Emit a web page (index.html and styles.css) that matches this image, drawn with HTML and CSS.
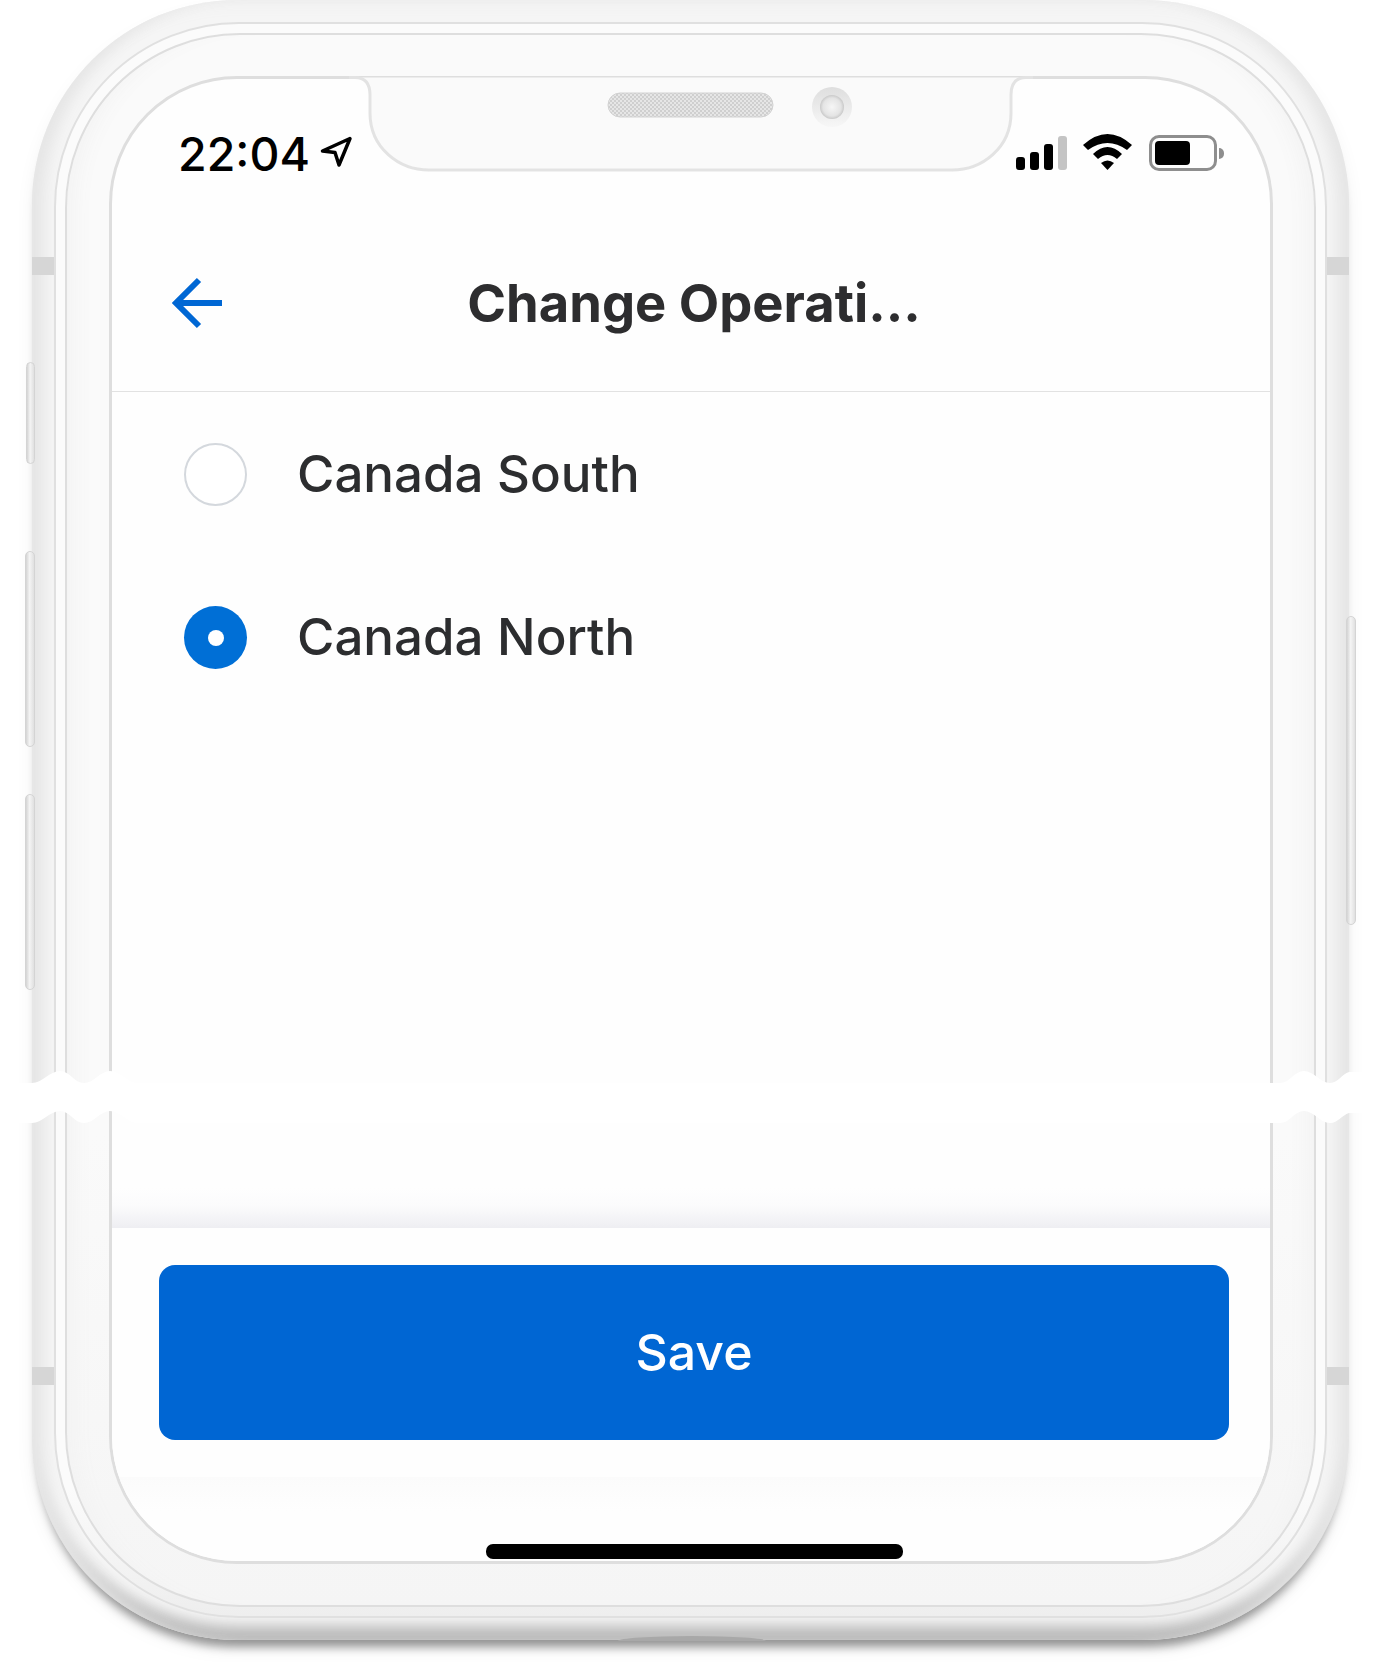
FILE: index.html
```html
<!DOCTYPE html>
<html lang="en">
<head>
<meta charset="utf-8">
<title>Change Operating Region</title>
<link rel="stylesheet" href="styles.css">
</head>
<body>
<div class="phone">
  <span class="side-btn btn-mute"></span>
  <span class="side-btn btn-up"></span>
  <span class="side-btn btn-down"></span>
  <span class="side-btn btn-power"></span>
  <span class="antenna ant-tl"></span>
  <span class="antenna ant-tr"></span>
  <span class="antenna ant-bl"></span>
  <span class="antenna ant-br"></span>
  <span class="foot-bump"></span>
  <div class="rim">
    <div class="bezel">
      <svg class="notch" width="684" height="97" viewBox="0 0 684 97">
        <defs>
          <pattern id="mesh" width="4" height="4" patternUnits="userSpaceOnUse">
            <rect width="4" height="4" fill="#e6e6e6"/>
            <path d="M0 0L4 4M4 0L0 4" stroke="#cfcfcf" stroke-width="1"/>
          </pattern>
          <radialGradient id="lens" cx="50%" cy="50%" r="50%">
            <stop offset="0" stop-color="#f6f6f6"/>
            <stop offset="0.75" stop-color="#e4e4e4"/>
            <stop offset="1" stop-color="#c9c9c9"/>
          </radialGradient>
          <linearGradient id="ring" x1="0" y1="0" x2="0" y2="1">
            <stop offset="0" stop-color="#dedede"/>
            <stop offset="1" stop-color="#f7f7f7"/>
          </linearGradient>
        </defs>
        <path d="M0 2.5H6Q21 2.5 21 20V38C21 73 50 95 80 95H603C633 95 662 73 662 38V20Q662 2.5 677 2.5H684" fill="#fafafa" stroke="#e3e3e3" stroke-width="3"/>
        <rect x="259" y="18" width="165" height="24" rx="12" fill="url(#mesh)" stroke="#d2d2d2" stroke-width="1"/>
        <circle cx="483" cy="32" r="20" fill="url(#ring)"/>
        <circle cx="483" cy="32" r="12" fill="url(#lens)"/>
      </svg>
      <div class="screen">
        <div class="status">
          <div class="clock">
            <span class="time">22:04</span>
            <svg class="loc" width="33" height="32" viewBox="0 0 33 32">
              <path d="M30 2.5L2.5 15L15 16.5L19 29Z" fill="none" stroke="#000" stroke-width="3.5" stroke-linejoin="round"/>
            </svg>
          </div>
          <div class="indicators">
            <div class="signal">
              <span class="bar bar-1"></span>
              <span class="bar bar-2"></span>
              <span class="bar bar-3"></span>
              <span class="bar bar-4"></span>
            </div>
            <svg class="wifi" width="49" height="36" viewBox="0 0 49 36">
              <path d="M0 11Q24.5 -11 49 11L44 16Q24.5 2 5 16Z"/>
              <path d="M10 20Q24.5 6 39 20L34 25Q24.5 17 15 25Z"/>
              <path d="M18 29Q24.5 24 31 29L24.5 36Z"/>
            </svg>
            <div class="battery">
              <div class="battery-case"><span class="battery-level"></span></div>
              <span class="battery-nub"></span>
            </div>
          </div>
        </div>
        <header class="nav">
          <svg class="back" width="52" height="54" viewBox="0 0 52 54">
            <path d="M52 26H6M29 3L6 26L29 49" fill="none" stroke="#0067d4" stroke-width="6"/>
          </svg>
          <h1 class="title">Change Operati...</h1>
          <span class="nav-spacer"></span>
        </header>
        <main class="options">
          <div class="option">
            <span class="radio"></span>
            <span class="option-label">Canada South</span>
          </div>
          <div class="option">
            <span class="radio radio-on"></span>
            <span class="option-label">Canada North</span>
          </div>
        </main>
        <div class="actions">
          <button class="save" type="button">Save</button>
        </div>
        <div class="home"><span class="home-bar"></span></div>
      </div>
    </div>
  </div>
  <svg class="tear" width="1388" height="64" viewBox="0 0 1388 64">
    <path d="M0 14C10 14 22 14 32 14C42 14 50 2 60 2C70 2 74 14 84 14C94 14 100 2 110 2C120 2 128 14 138 14H1250C1260 14 1268 14 1280 14C1290 14 1294 2 1304 2C1314 2 1320 14 1330 14C1338 14 1342 5 1349 3H1388V44H1349C1342 46 1338 54 1330 54C1320 54 1314 42 1304 42C1294 42 1290 54 1280 54C1268 54 1260 54 1250 54H138C128 54 120 42 110 42C100 42 94 54 84 54C74 54 70 42 60 42C50 42 42 54 32 54H0Z" fill="#fff"/>
  </svg>
</div>
</body>
</html>
```

FILE: styles.css
```css
* {
  box-sizing: border-box;
}

html,
body {
  margin: 0;
  padding: 0;
  background: #fff;
}

body {
  width: 1388px;
  height: 1662px;
  padding-left: 32px;
  overflow: hidden;
  font-family: Inter, "Liberation Sans", sans-serif;
}

.phone {
  position: relative;
  width: 1317px;
  height: 1640px;
  padding: 22px;
  border-radius: 205px;
  background: #f5f5f5;
  box-shadow:
    inset 20px 0 14px -8px #e6e6e6,
    inset -20px 0 14px -8px #e6e6e6,
    inset 0 14px 14px -8px #f0f0f0,
    inset 0 -22px 14px -8px #b9b9b9,
    0 13px 10px -6px rgba(0, 0, 0, 0.38),
    0 10px 22px -6px rgba(0, 0, 0, 0.1);
}

.rim {
  height: 100%;
  padding: 9px;
  border: 2px solid #e0e0e0;
  border-radius: 185px;
  background: linear-gradient(180deg, #fbfbfb 0, #fbfbfb 92%, #eeeeee 100%);
}

.bezel {
  position: relative;
  height: 100%;
  padding: 41px 41px 41px 42px;
  border: 2px solid #dedede;
  border-radius: 175px;
  background: linear-gradient(180deg, #fafafa 0, #fafafa 70%, #f5f5f5 100%);
  box-shadow:
    inset 22px 0 20px -14px #f3f3f3,
    inset -22px 0 20px -14px #f3f3f3;
}

.screen {
  display: flex;
  flex-direction: column;
  height: 100%;
  border: 3px solid #dedede;
  border-radius: 128px;
  background: #fefefe;
  overflow: hidden;
}

/* device details */

.side-btn {
  position: absolute;
  border: 1px solid #d4d4d4;
  border-radius: 5px;
  background: linear-gradient(90deg, #d4d4d4 0, #f4f4f4 45%, #e0e0e0 100%);
}

.btn-mute {
  left: -6px;
  top: 362px;
  width: 9px;
  height: 102px;
}

.btn-up {
  left: -7px;
  top: 551px;
  width: 10px;
  height: 196px;
}

.btn-down {
  left: -7px;
  top: 794px;
  width: 10px;
  height: 196px;
}

.btn-power {
  right: -7px;
  top: 616px;
  width: 10px;
  height: 309px;
}

.antenna {
  position: absolute;
  width: 22px;
  height: 18px;
  background: #d6d6d6;
}

.ant-tl {
  left: 0;
  top: 257px;
}

.ant-tr {
  right: 0;
  top: 257px;
}

.ant-bl {
  left: 0;
  top: 1367px;
}

.ant-br {
  right: 0;
  top: 1367px;
}

.foot-bump {
  position: absolute;
  left: 586px;
  top: 1636px;
  width: 148px;
  height: 5px;
  border-radius: 50% 50% 0 0 / 100% 100% 0 0;
  background: #a8a8a8;
}

.notch {
  position: absolute;
  left: 50%;
  top: 40px;
  transform: translateX(-50%);
}

.tear {
  position: absolute;
  left: -32px;
  top: 1069px;
}

/* status bar */

.status {
  display: flex;
  flex: 0 0 138px;
  justify-content: space-between;
  padding: 48px 46px 0 66px;
}

.clock {
  display: flex;
  align-items: flex-start;
  gap: 10px;
}

.time {
  color: #000;
  font-size: 46.5px;
  font-weight: 500;
  line-height: 54px;
}

.loc {
  margin-top: 9px;
}

.indicators {
  display: flex;
  align-items: flex-start;
  padding-top: 7px;
}

.signal {
  display: flex;
  align-items: flex-end;
  gap: 5px;
  height: 36px;
  margin-right: 16px;
}

.bar {
  width: 9px;
  border-radius: 3px;
  background: #000;
}

.bar-1 {
  height: 13px;
}

.bar-2 {
  height: 18px;
}

.bar-3 {
  height: 26px;
}

.bar-4 {
  height: 34px;
  background: #c4c4c4;
}

.wifi {
  margin-right: 17px;
}

.battery {
  display: flex;
  align-items: center;
  gap: 2px;
  margin-top: 1px;
}

.battery-case {
  width: 68px;
  height: 36px;
  padding: 3px;
  border: 3px solid #8e8e8e;
  border-radius: 10px;
}

.battery-level {
  display: block;
  width: 35px;
  height: 24px;
  border-radius: 4px;
  background: #000;
}

.battery-nub {
  width: 5px;
  height: 11px;
  border-radius: 0 5px 5px 0;
  background: #8e8e8e;
}

/* nav bar */

.nav {
  display: flex;
  flex: 0 0 175px;
  align-items: center;
  padding: 0 52px 0 58px;
  border-bottom: 1px solid #e2e2e2;
}

.back {
  flex: 0 0 52px;
}

.title {
  flex: 1;
  margin: 0;
  padding-bottom: 2px;
  color: #2d2d2f;
  font-size: 52.5px;
  font-weight: 700;
  text-align: center;
  white-space: nowrap;
}

.nav-spacer {
  flex: 0 0 52px;
}

/* options */

.options {
  flex: 1;
  padding-top: 1px;
  background: linear-gradient(180deg, #fefefe 0, #fefefe calc(100% - 40px), #fbfbfc calc(100% - 22px), #eeeef2 100%);
}

.option {
  display: flex;
  align-items: center;
  gap: 50px;
  height: 163px;
  padding-left: 72px;
}

.radio {
  width: 63px;
  height: 63px;
  border: 2px solid #d4d8dd;
  border-radius: 50%;
  background: #fff;
}

.radio-on {
  display: flex;
  align-items: center;
  justify-content: center;
  border: 0;
  background: #006fd6;
}

.radio-on::after {
  content: "";
  width: 16px;
  height: 16px;
  border-radius: 50%;
  background: #fff;
}

.option-label {
  padding-bottom: 3px;
  color: #2c2d2f;
  font-size: 51px;
  font-weight: 450;
}

/* actions */

.actions {
  display: flex;
  flex: 0 0 249px;
  align-items: center;
  padding: 0 41px 0 47px;
  background: #fefefe;
}

.save {
  width: 100%;
  height: 175px;
  padding-bottom: 2px;
  border: 0;
  border-radius: 16px;
  background: #0066d3;
  color: #fff;
  font-family: inherit;
  font-size: 50px;
  font-weight: 500;
}

.home {
  display: flex;
  flex: 0 0 84px;
  align-items: flex-end;
  justify-content: center;
  padding: 0 0 2px 7px;
  background: linear-gradient(180deg, #fbfbfb 0, #fefefe 40%);
}

.home-bar {
  width: 417px;
  height: 15px;
  border-radius: 7px;
  background: #000;
}
```
